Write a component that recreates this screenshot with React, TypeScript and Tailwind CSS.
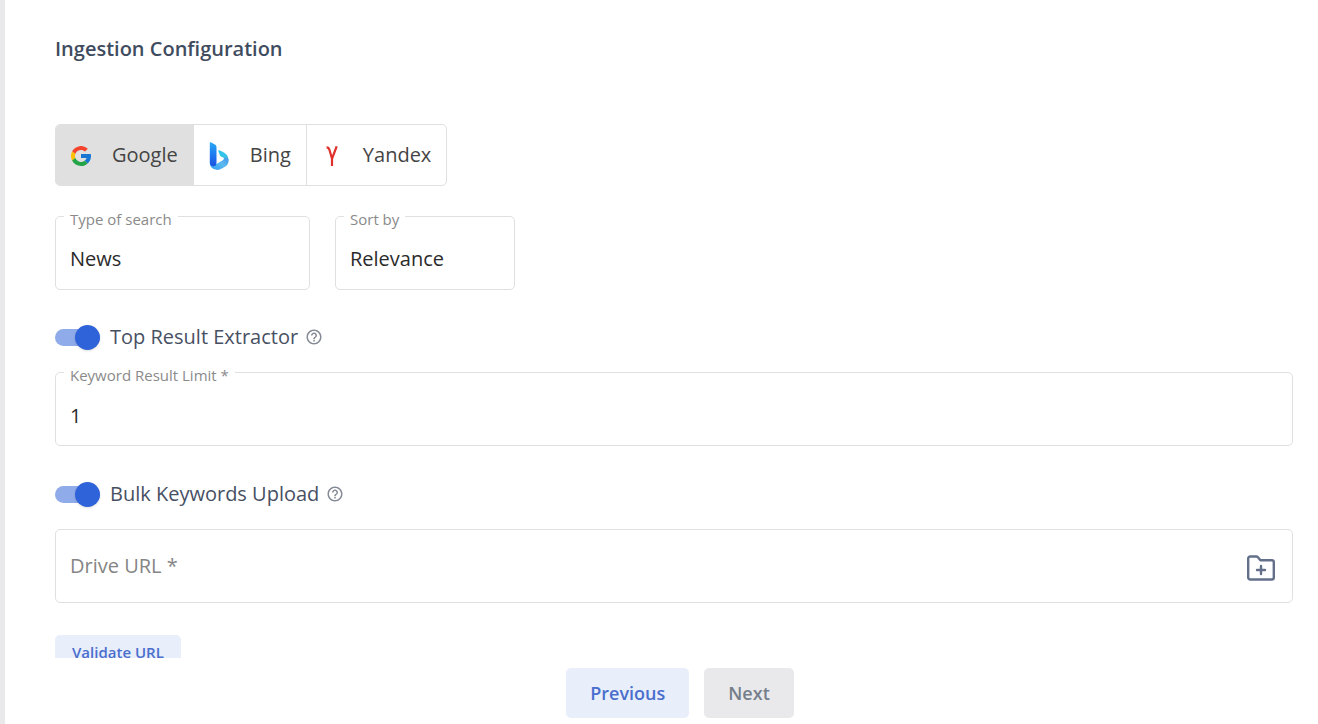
import { useState, type ReactNode } from "react";
import { MdHelpOutline } from "react-icons/md";

function GoogleLogo() {
  return (
    <svg viewBox="4 4 40 40" className="mt-0.5 size-5" aria-hidden="true">
      <path fill="#1976d2" d="M43.6 20H24v8h11.3a12 12 0 0 1-4.1 5.6l6.2 5.2C37 39.2 44 34 44 24c0-1.300-.1-2.700-.4-4z" />
      <path fill="#ffc107" d="M6.300 14.700A20 20 0 0 0 6.300 33.300l6.500-5A12 12 0 0 1 12.900 19.500z" />
      <path fill="#f4442e" d="M6.300 14.700l6.600 4.800A12 12 0 0 1 24 12c3.100 0 5.800 1.200 8 3l5.700-5.600A20 20 0 0 0 6.300 14.700z" />
      <path fill="#22a447" d="M24 44c5.200 0 9.900-2 13.400-5.200l-6.200-5.200A12 12 0 0 1 12.700 28.100l-6.500 5A20 20 0 0 0 24 44z" />
    </svg>
  );
}

function BingLogo() {
  return (
    <svg viewBox="0 0 20 28" className="mt-0.5 h-7 w-5" aria-hidden="true">
      <defs>
        <linearGradient id="bing-stem" x1="0" y1="0" x2="0" y2="1">
          <stop offset="0" stopColor="#2aa9f5" />
          <stop offset="0.5" stopColor="#1f7cf0" />
          <stop offset="1" stopColor="#1b4fe0" />
        </linearGradient>
        <linearGradient id="bing-base" x1="0" y1="1" x2="1" y2="0">
          <stop offset="0" stopColor="#2f9cf2" />
          <stop offset="0.55" stopColor="#5db9f0" />
          <stop offset="1" stopColor="#3c8fe6" />
        </linearGradient>
        <linearGradient id="bing-arm" x1="0" y1="0" x2="1" y2="1">
          <stop offset="0" stopColor="#2fc4f2" />
          <stop offset="0.6" stopColor="#35c3e8" />
          <stop offset="1" stopColor="#4a9fe8" />
        </linearGradient>
      </defs>
      <path fill="url(#bing-base)" d="M.8 20.500c2 3.500 5 2.500 7.500 1l5.500-3.300c1.500-1 1.500-2.700.6-3.700 2.600.2 5.200 1.700 5.200 4.200 0 2.300-1.300 4.500-3.200 5.700l-3.600 2.200a8.600 8.600 0 0 1-8 .5C2 25.900.8 23.700.8 20.500z" />
      <path fill="url(#bing-stem)" d="M.8 1C.8.300 1.300.1 1.800.3l4.100 2.100c1.100.6 1.600 1.500 1.600 2.800v15.500c0 2.400-1.200 3.600-3.300 3.600C2.200 24.300.8 22.700.8 20.500z" />
      <path fill="url(#bing-arm)" d="M9.300 9.300c-.3-.9.300-1.300 1.200-1l4 2c3.200 1.600 5.100 4.400 5.100 8.400-.8-1.700-2.500-2.400-4.500-2.700l-2.700-1.200c-.9-.4-1.300-.9-1.600-1.700z" />
    </svg>
  );
}

function YandexLogo() {
  return (
    <svg viewBox="0 0 20 20" className="mt-0.5 size-5" fill="none" stroke="#e0312c" strokeWidth="2.200" aria-hidden="true">
      <path d="M4.600 1.300C6.400 1.300 7 2.300 7.500 4L10 12.800M14.700 .300L10 12.800V20" />
    </svg>
  );
}

function FolderPlusIcon() {
  return (
    <svg
      viewBox="0 0 30 28"
      className="mt-1 h-7 w-[30px]"
      fill="none"
      stroke="#64708a"
      strokeWidth="2.400"
      strokeLinecap="round"
      strokeLinejoin="round"
      aria-hidden="true"
    >
      <path d="M4.200 2.500h6.200a2 2 0 0 1 1.500.7l2.500 3.100h11.400a2 2 0 0 1 2 2v15.200a2 2 0 0 1-2 2H4.200a2 2 0 0 1-2-2V4.500a2 2 0 0 1 2-2z" />
      <path d="M15 12v8M11 16h8" />
    </svg>
  );
}

const engines = [
  { id: "Google", logo: <GoogleLogo /> },
  { id: "Bing", logo: <BingLogo /> },
  { id: "Yandex", logo: <YandexLogo /> },
];

function OutlinedField({ id, label, className, children }: { id: string; label: string; className: string; children: ReactNode }) {
  return (
    <div className={`relative h-[74px] rounded-[5px] border border-[#e0e0e0] ${className}`}>
      <label htmlFor={id} className="absolute -top-2 left-2 bg-white px-1.5 text-[15px] leading-5 text-[#8a8a8a]">
        {label}
      </label>
      {children}
    </div>
  );
}

const controlClass =
  "block h-full w-full appearance-none bg-transparent px-3.5 pt-3 text-xl text-[#2b2b2b] outline-none";

function Toggle({ id, label }: { id: string; label: string }) {
  const [on, setOn] = useState(true);
  return (
    <div className="flex h-7 items-center">
      <input
        id={id}
        type="checkbox"
        role="switch"
        checked={on}
        onChange={(e) => setOn(e.target.checked)}
        className="relative h-[17px] w-[45px] appearance-none rounded-full bg-[#bdbdbd] after:absolute after:-top-1 after:left-0 after:size-[25px] after:rounded-full after:bg-white after:shadow-sm after:content-[''] checked:bg-[#90abea] checked:after:left-5 checked:after:bg-[#2f63d9]"
      />
      <label htmlFor={id} className="ml-2.5 text-xl text-[#475063]">
        {label}
      </label>
      <MdHelpOutline className="ml-[7px] size-[18px] text-[#858b96]" aria-hidden="true" />
    </div>
  );
}

export default function App() {
  const [engine, setEngine] = useState("Google");
  const [limit, setLimit] = useState("1");
  const [url, setUrl] = useState("");

  return (
    <div className="flex h-screen flex-col border-l-[5px] border-[#e9e9ec] bg-white font-['Open_Sans',sans-serif]">
      <main className="min-h-0 flex-1 overflow-y-auto pr-[25px] pl-[50px] [scrollbar-width:none]">
        <h1 className="pt-[35px] text-xl font-semibold text-[#3f4c60]">Ingestion Configuration</h1>

        <div className="mt-[61px] flex h-[62px] w-fit overflow-hidden rounded-[5px] border border-[#e0e0e0]" role="group" aria-label="Search engine">
          {engines.map(({ id, logo }) => (
            <button
              key={id}
              type="button"
              aria-pressed={engine === id}
              onClick={() => setEngine(id)}
              className="flex items-center gap-[21px] border-l border-[#e0e0e0] px-[15px] text-xl text-[#444] first:border-l-0 aria-pressed:bg-[#e0e0e0]"
            >
              {logo}
              {id}
            </button>
          ))}
        </div>

        <div className="mt-[30px] flex gap-[25px]">
          <OutlinedField id="search-type" label="Type of search" className="w-[255px]">
            <select id="search-type" className={controlClass}>
              <option>News</option>
            </select>
          </OutlinedField>
          <OutlinedField id="sort-by" label="Sort by" className="w-[180px]">
            <select id="sort-by" className={controlClass}>
              <option>Relevance</option>
            </select>
          </OutlinedField>
        </div>

        <div className="mt-[33px]">
          <Toggle id="top-result" label="Top Result Extractor" />
        </div>
        <OutlinedField id="limit" label="Keyword Result Limit *" className="mt-[21px] w-full">
          <input id="limit" type="text" inputMode="numeric" value={limit} onChange={(e) => setLimit(e.target.value)} className={controlClass} />
        </OutlinedField>

        <div className="mt-[34px]">
          <Toggle id="bulk-upload" label="Bulk Keywords Upload" />
        </div>
        <div className="mt-[21px] flex h-[74px] items-center rounded-[5px] border border-[#e0e0e0] pr-4 pl-3.5">
          <input
            type="text"
            aria-label="Drive URL"
            placeholder="Drive URL *"
            value={url}
            onChange={(e) => setUrl(e.target.value)}
            className="h-full min-w-0 flex-1 bg-transparent pb-0.5 text-xl text-[#2b2b2b] outline-none placeholder:text-[#858585]"
          />
          <button type="button" aria-label="Choose from drive">
            <FolderPlusIcon />
          </button>
        </div>

        <button type="button" className="mt-8 h-[34px] rounded-[5px] bg-[#e9eefb] px-[17px] text-[15px] font-semibold text-[#4a6ecd]">
          Validate URL
        </button>
      </main>

      <footer className="flex justify-center gap-[15px] pt-2.5 pr-[25px] pb-1.5 pl-[62px]">
        <button type="button" className="h-[50px] rounded-[5px] bg-[#e9eefb] px-6 text-lg font-semibold text-[#4a6ecd]">
          Previous
        </button>
        <button type="button" disabled className="h-[50px] rounded-[5px] bg-[#e9e9ec] px-6 text-lg font-semibold text-[#757e8a]">
          Next
        </button>
      </footer>
    </div>
  );
}
